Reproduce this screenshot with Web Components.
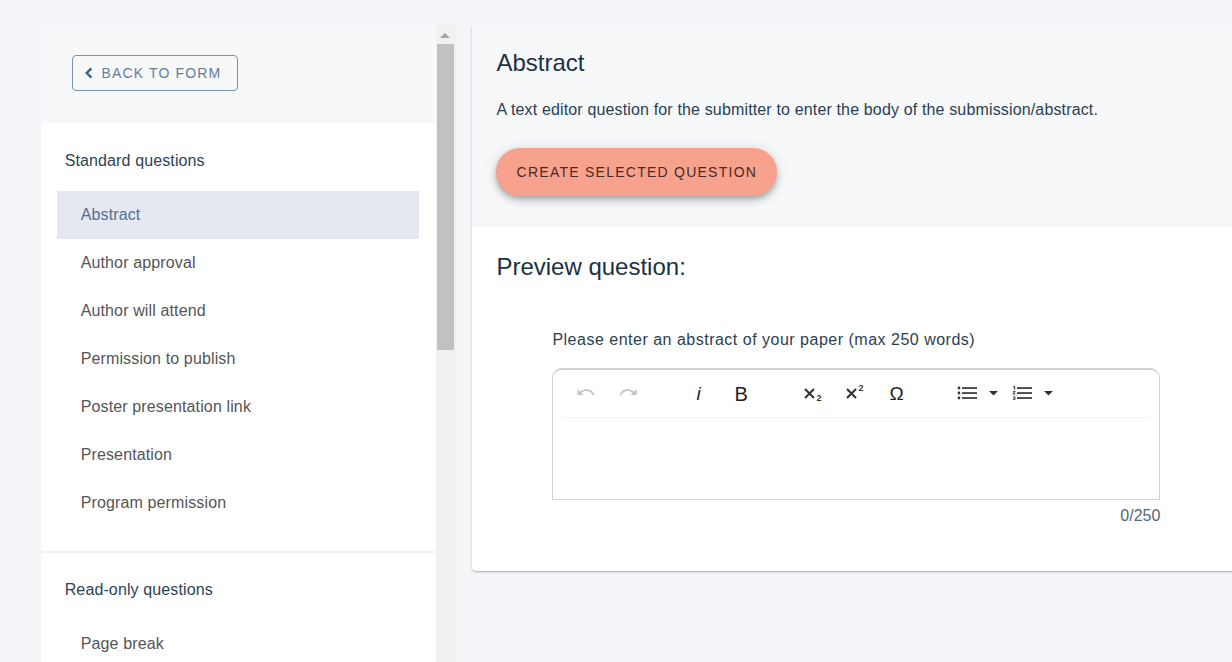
<!DOCTYPE html>
<html>
<head>
<meta charset="utf-8">
<title>Abstract question</title>
<style>
  html,body{margin:0;height:100%;overflow:hidden}
  body{background:#f3f5f9;font-family:"Liberation Sans",Arial,sans-serif;color:#1c3144}
  q-page{height:662px}
</style>
</head>
<body>
<q-page>
  <q-sidebar slot="side">
    <q-back-button slot="head">BACK TO FORM</q-back-button>
    <q-group title="Standard questions">
      <q-item selected>Abstract</q-item>
      <q-item>Author approval</q-item>
      <q-item>Author will attend</q-item>
      <q-item>Permission to publish</q-item>
      <q-item>Poster presentation link</q-item>
      <q-item>Presentation</q-item>
      <q-item>Program permission</q-item>
    </q-group>
    <q-group title="Read-only questions" divided>
      <q-item>Page break</q-item>
    </q-group>
  </q-sidebar>
  <q-detail slot="main" heading="Abstract" description="A text editor question for the submitter to enter the body of the submission/abstract." action="CREATE SELECTED QUESTION">
    <q-editor label="Please enter an abstract of your paper (max 250 words)" counter="0/250"></q-editor>
  </q-detail>
</q-page>

<script>
(function() {
  'use strict';

  class QPage extends HTMLElement {
    constructor() {
      super();
      this.attachShadow({ mode: 'open' }).innerHTML = `
        <style>
          :host{display:flex;gap:15.7px;padding:24.3px 0 0 40.7px;box-sizing:border-box;overflow:hidden;width:1232px}
          ::slotted(*){flex:none}
        </style>
        <slot name="side"></slot><slot name="main"></slot>`;
    }
  }

  class QSidebar extends HTMLElement {
    constructor() {
      super();
      this.attachShadow({ mode: 'open' }).innerHTML = `
        <style>
          :host{display:flex;width:416px;height:638px;overflow:hidden;border-radius:4px 4px 0 0}
          .col{width:395px;background:#fff;flex:none}
          .head{background:#f7f8fa;height:99px;padding:31px 0 0 31.300px;box-sizing:border-box}
          .bar{width:21px;background:#f1f1f1;flex:none;display:flex;flex-direction:column;align-items:center;padding:0 3px 0 1px;box-sizing:border-box}
          .up{height:20px;width:100%;display:flex;justify-content:center;padding-top:9px;box-sizing:border-box}
          .up i{display:block;width:0;height:0;border:5px solid transparent;border-top:0;border-bottom:5px solid #a6a6a6}
          .thumb{width:100%;height:306px;background:#c1c1c1}
        </style>
        <div class="col"><div class="head"><slot name="head"></slot></div><slot></slot></div>
        <div class="bar"><div class="up"><i></i></div><div class="thumb"></div></div>`;
    }
  }

  class QBackButton extends HTMLElement {
    constructor() {
      super();
      this.attachShadow({ mode: 'open' }).innerHTML = `
        <style>
          :host{display:inline-flex;align-items:center;height:36px;width:166px;box-sizing:border-box;border:1.300px solid #7c92ac;border-radius:4px;padding-left:10px;gap:7.500px;font-size:14px;letter-spacing:1.15px;color:#647d9a}
          svg{width:11px;height:14px;flex:none}
        </style>
        <svg viewBox="0 0 11 14"><path d="M8.400 2.300 3.700 7l4.700 4.700" fill="none" stroke="#3f5f86" stroke-width="2.400"/></svg>
        <slot></slot>`;
    }
  }

  class QGroup extends HTMLElement {
    constructor() {
      super();
      this.attachShadow({ mode: 'open' }).innerHTML = `
        <style>
          :host{display:block;padding:0 16px 24px}
          :host([divided]){border-top:2px solid #f1f2f4;padding-top:0}
          .t{font-size:16px;line-height:20px;color:#2c4356;padding:28px 8px 20px;letter-spacing:.12px}
          :host([divided]) .t{padding:27px 8px 20px}
        </style>
        <div class="t"></div><slot></slot>`;
    }
    connectedCallback() { this.shadowRoot.querySelector('.t').textContent = this.getAttribute('title'); this.removeAttribute('title'); }
  }

  class QItem extends HTMLElement {
    constructor() {
      super();
      this.attachShadow({ mode: 'open' }).innerHTML = `
        <style>
          :host{display:flex;align-items:center;height:48px;width:362.600px;box-sizing:border-box;padding-left:24px;font-size:16px;color:#555;letter-spacing:.13px}
          :host([selected]){background:#e4e9f1;color:#54708f}
        </style>
        <slot></slot>`;
    }
  }

  class QDetail extends HTMLElement {
    constructor() {
      super();
      this.attachShadow({ mode: 'open' }).innerHTML = `
        <style>
          :host{display:block;width:800px;height:546.400px;background:#fff;border-radius:4px;box-shadow:0 1px 2px rgba(0,0,0,.3);overflow:hidden}
          .top{background:#f7f8fa;height:202.700px;padding:24px 24px 0;box-sizing:border-box}
          h2{margin:0;font-size:24px;font-weight:400;line-height:30px;color:#1c3144}
          p{margin:21.500px 0 0;font-size:16px;line-height:20px;color:#2a3f52;letter-spacing:.15px}
          button{display:block;margin-top:28.500px;height:47.500px;width:281px;border:0;border-radius:24px;background:#f6a28d;color:#4a2a22;font:14px "Liberation Sans",Arial,sans-serif;letter-spacing:1.25px;box-shadow:0 3px 5px -1px rgba(0,0,0,.2),0 5px 8px 0 rgba(0,0,0,.14),0 1px 14px 0 rgba(0,0,0,.12);padding:0}
          h3{margin:0;padding:25px 24px 0;font-size:24px;font-weight:400;line-height:30px;color:#1c3144}
        </style>
        <div class="top"><h2></h2><p></p><button></button></div>
        <h3>Preview question:</h3>
        <slot></slot>`;
    }
    connectedCallback() {
      const r = this.shadowRoot;
      r.querySelector('h2').textContent = this.getAttribute('heading');
      r.querySelector('p').textContent = this.getAttribute('description');
      r.querySelector('button').textContent = this.getAttribute('action');
    }
  }

  class QEditor extends HTMLElement {
    constructor() {
      super();
      this.attachShadow({ mode: 'open' }).innerHTML = `
        <style>
          :host{display:block;margin:48.500px 0 0 80px;width:608px;font-size:16px}
          .l{line-height:20px;color:#2a3f52;letter-spacing:.5px}
          .box{margin-top:18px;height:132px;box-sizing:border-box;border:1px solid #d2d2d2;border-top-width:2px;border-radius:10px 10px 0 0;padding:0 9px}
          .tb{height:48px;border-bottom:1px solid #f2f2f2;display:flex;align-items:center;position:relative;padding-bottom:2px;box-sizing:border-box}
          .tb>*{position:absolute;top:14px}
          svg{display:block;overflow:visible}
          .c{text-align:right;line-height:20px;margin-top:6px;color:#55677a}
          .g{font-family:"Liberation Sans",Arial,sans-serif;color:#222}
        </style>
        <div class="l"></div>
        <div class="box">
          <div class="tb">
            <svg style="left:14px;top:16px" width="20" height="14" viewBox="0 0 20 14"><path d="M1.500 3v6h6l-2.200-2.200C7 5.500 9 4.800 11 5c2.600.2 5 2 6 4.500l1.600-.6C17.400 5.500 14.500 3.300 11 3.200 8.600 3 6.200 4 4 5.600z" fill="#c4c4c4"/></svg>
            <svg style="left:56px;top:16px" width="20" height="14" viewBox="0 0 20 14"><path d="M18.500 3v6h-6l2.200-2.200C13 5.500 11 4.800 9 5c-2.600.2-5 2-6 4.500l-1.600-.6C2.600 5.500 5.500 3.300 9 3.200c2.400-.2 4.800.8 7 2.400z" fill="#c4c4c4"/></svg>
            <span class="g" style="left:134px;top:14px;font-style:italic;font-size:19px;line-height:20px">i</span>
            <span class="g" style="left:172px;top:14px;font-size:20px;line-height:20px">B</span>
            <svg style="left:242px;top:17px" width="22" height="16" viewBox="0 0 22 16"><path d="M1 2l9 9M10 2l-9 9" fill="none" stroke="#333" stroke-width="2.100"/></svg>
            <span class="g" style="left:254px;top:22px;font-size:9px;line-height:12px;font-weight:700;color:#333">2</span>
            <svg style="left:284px;top:17px" width="22" height="16" viewBox="0 0 22 16"><path d="M1 2l9 9M10 2l-9 9" fill="none" stroke="#333" stroke-width="2.100"/></svg>
            <span class="g" style="left:296px;top:12px;font-size:9px;line-height:12px;font-weight:700;color:#333">2</span>
            <span class="g" style="left:327px;top:14px;font-size:19px;line-height:20px;color:#1f1f1f">Ω</span>
            <svg style="left:395px;top:16px" width="22" height="14" viewBox="0 0 22 14"><g fill="#333"><circle cx="2" cy="2" r="1.400"/><circle cx="2" cy="7" r="1.400"/><circle cx="2" cy="12" r="1.400"/><rect x="5" y="1.200" width="15" height="1.700"/><rect x="5" y="6.200" width="15" height="1.700"/><rect x="5" y="11.200" width="15" height="1.700"/></g></svg>
            <svg style="left:427px;top:21px" width="9" height="5" viewBox="0 0 9 5"><path d="M0 0h9L4.500 4.500z" fill="#333"/></svg>
            <svg style="left:450px;top:16px" width="22" height="14" viewBox="0 0 22 14"><g fill="#333"><path d="M1 .3h2.200v3.400H2.200V1.300H1zM.8 5h2.600v.8L1.900 7.600h1.500v.8H.8v-.8l1.500-1.800H.8zM.8 10.400h2.600v3.400H.8V13h1.700v-.6H1.300v-.7h1.200v-.5H.8z"/><rect x="5" y="1.200" width="15" height="1.700"/><rect x="5" y="6.200" width="15" height="1.700"/><rect x="5" y="11.200" width="15" height="1.700"/></g></svg>
            <svg style="left:482px;top:21px" width="9" height="5" viewBox="0 0 9 5"><path d="M0 0h9L4.500 4.500z" fill="#333"/></svg>
          </div>
        </div>
        <div class="c"></div>`;
    }
    connectedCallback() {
      this.shadowRoot.querySelector('.l').textContent = this.getAttribute('label');
      this.shadowRoot.querySelector('.c').textContent = this.getAttribute('counter');
    }
  }

  customElements.define('q-page', QPage);
  customElements.define('q-sidebar', QSidebar);
  customElements.define('q-back-button', QBackButton);
  customElements.define('q-group', QGroup);
  customElements.define('q-item', QItem);
  customElements.define('q-detail', QDetail);
  customElements.define('q-editor', QEditor);
}());
</script>
</body>
</html>
